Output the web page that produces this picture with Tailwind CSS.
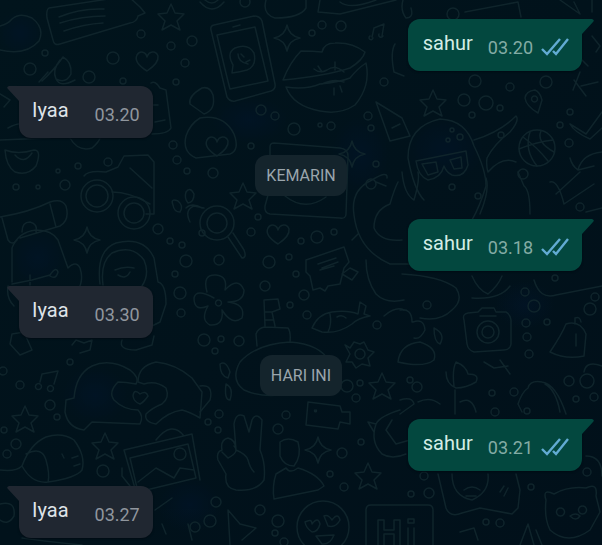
<!DOCTYPE html>
<html lang="id">
  <head>
    <meta charset="UTF-8" />
    <meta name="viewport" content="width=device-width, initial-scale=1.0" />
    <title>Chat</title>
    <script src="https://cdn.jsdelivr.net/npm/@tailwindcss/browser@4"></script>
  </head>
  <body class="relative min-h-screen overflow-x-hidden bg-[#01111b] font-[Roboto,sans-serif]">
    <!-- Wallpaper -->
    <svg class="absolute inset-0 h-full w-full" viewBox="0 0 602 545" preserveAspectRatio="xMidYMid slice" fill="none" stroke="#0f242b" stroke-width="1.5" stroke-linecap="round" stroke-linejoin="round" aria-hidden="true">
      <defs>
        <path id="star" d="M0-13 4-4 13-3 6 4 9 13 0 8-9 13-6 4-13-3-4-4Z" />
        <path id="spark" d="M0-13Q2-2 13 0 2 2 0 13-2 2-13 0-2-2 0-13Z" />
        <path id="heart" d="M0 10C-8 5-13 0-10-6-7-11-1-9 0-4 2-10 9-11 11-5 12 1 6 6 0 10Z" />
        <linearGradient id="night" x1="0" y1="0" x2="1" y2="1">
          <stop offset="0" stop-color="#01141c" />
          <stop offset="0.5" stop-color="#01121b" />
          <stop offset="1" stop-color="#01101a" />
        </linearGradient>
        <radialGradient id="glow">
          <stop offset="0" stop-color="#02152a" />
          <stop offset="1" stop-color="#02152a" stop-opacity="0" />
        </radialGradient>
      </defs>
      <rect width="602" height="545" fill="url(#night)" stroke="none" />

      <!-- soft blue patches -->
      <g fill="url(#glow)" stroke="none" opacity="0.6">
        <circle cx="20" cy="33" r="24" />
        <circle cx="38" cy="258" r="30" />
        <ellipse cx="445" cy="150" rx="40" ry="34" />
        <ellipse cx="95" cy="395" rx="34" ry="30" />
        <ellipse cx="250" cy="120" rx="40" ry="24" />
        <ellipse cx="360" cy="155" rx="30" ry="40" />
        <ellipse cx="190" cy="505" rx="32" ry="28" />
        <ellipse cx="525" cy="305" rx="30" ry="24" />
      </g>

      <!-- top row -->
      <path d="M0 26Q8 24 12 19 20 12 32 18 45 28 39 41 26 56 0 50" />
      <path d="M49 8 128-4 140 7 145 13 138 16Q137 22 130 23L60 44Q54 46 53 40L47 18Q46 10 49 8Z" />
      <path d="M59 17Q80 8 104 9M60 23Q82 16 105 16M64 31Q84 24 103 23" />
      <path d="M200 2Q212 16 224 2M205 0Q212 6 218 0" />
      <path d="M266 0Q262 14 275 18 300 18 306 8V0M320 0 318 12 340 14 396 0M340 2Q350 10 376 0" />
      <path d="M403 0Q400 10 406 18 414 18 411 8M465 12 518 2 521 17M560 0 580 14 574 2M592 0V12" />
      <path d="M211 30Q210 26 214 25L254 16Q260 16 262 21L275 84Q276 89 271 91L235 101Q230 102 227 97Z" />
      <path d="M217 35 255 27 268 81 230 89Q226 74 217 35M233 27 240 25" />
      <path d="M232 73 233 65Q226 53 235 48 248 43 254 53 257 66 247 70 240 72 232 73M238 54Q238 62 248 64M241 54 244 57M246 62 250 60" />
      <path d="M283 80Q290 62 301 51 313 51 322 52 324 43 335 43 352 42 365 52 363 60 350 68 325 76 283 80Z" />
      <path d="M314 69Q320 74 327 70 335 64 344 72M318 66 322 72M335 62V70" />
      <path d="M286 87Q306 90 320 84 340 82 350 78 357 69 366 63 371 86 355 105 340 115 320 111 293 106 286 87ZM322 84Q334 78 344 82M334 88V95M340 86 342 92" />
      <path d="M372 37 374 28 384 24 382 36M373 38A2 2 0 1 1 370 36M383 36A2 2 0 1 1 379 34" />

      <!-- second row -->
      <path d="M42 81Q54 70 63 57 72 62 71 74 66 84 56 79 52 70 60 60M39 82 48 72M75 80Q60 88 56 79" />
      <path d="M0 94 10 100 4 107M8 128Q25 118 40 130M5 150Q18 155 34 150 42 150 36 166 28 176 15 172 6 166 5 150ZM15 155Q24 165 32 153M0 140 50 138M70 138Q78 152 92 148 99 142 100 138" />
      <path d="M151 83Q155 80 160 88L166 90 171 128Q168 134 152 134M153 105H158M155 122 165 120M202 88Q210 86 213 95 216 110 204 114L190 104Q188 96 202 88Z" />
      <path d="M200 118Q224 114 234 134 240 150 230 154L196 158Q182 152 186 136 190 124 200 118Z" />
      <path d="M376 102 402 118 410 136 390 141ZM392 128 400 124M395 44Q390 52 394 72L404 76" />
      <path d="M270 155V147Q270 143 274 143L340 148Q348 149 348 156L346 214Q346 219 340 218L270 214Q264 213 265 206L268 195M285 196Q305 212 326 197" />

      <!-- ghost with glasses, party cone, ball -->
      <path d="M408 158Q408 126 440 119 466 120 474 146 486 170 486 186 480 206 472 220M408 158Q414 190 424 200M416 161 466 151 468 165Q464 178 452 175 446 172 444 166 441 178 428 180 418 176 416 161ZM422 164 436 162 438 172 428 175ZM450 160 461 157 462 168 454 169Z" />
      <path d="M474 140Q500 132 516 116 520 120 510 132 494 144 487 158 486 166 488 172 502 156 516 162 522 176" />
      <circle cx="537" cy="148" r="18" />
      <path d="M523 137Q538 148 548 161M530 132Q524 150 537 166M519 149Q536 142 553 140M541 131Q536 142 554 152" />
      <path d="M570 124 586 134 602 112M570 124Q574 132 590 139L602 128M570 158Q572 166 578 170 582 154 602 152M578 170 594 166" />
      <path d="M592 36 600 46 596 52M582 60 588 66M573 90 580 72M581 86 598 82M574 80 586 96" />

      <!-- left: sewing machine, skates, ring -->
      <path d="M84 176Q88 170 106 172L118 167 124 156 148 155 154 162V214H146M112 192Q130 192 150 204M130 168 152 188" />
      <circle cx="97" cy="196" r="16" />
      <circle cx="97" cy="196" r="11" />
      <circle cx="134" cy="213" r="16" />
      <circle cx="134" cy="213" r="10" />
      <path d="M0 217Q30 212 50 202 62 198 66 206 70 220 60 226L20 238M2 218 8 240Q12 246 17 240M50 204 56 227M22 232Q22 222 30 222 38 224 36 232" />
      <path d="M12 282V248Q18 232 36 230 52 230 58 240L68 268Q76 260 80 268 84 280 78 290M12 284 32 280 50 275Q56 266 58 272 56 280 50 276M30 275V285M8 286Q6 298 14 306" />
      <path d="M100 284Q96 250 116 243 144 236 154 258L158 282Q166 284 166 304L160 322 152 326M103 285Q100 262 112 253 132 244 144 260 150 274 142 286M115 270Q124 266 134 268M118 275Q126 280 130 272" />
      <path d="M122 340Q118 350 136 350L152 345 154 336M72 345 76 340 84 343 92 340 90 350 80 353M12 334 24 332 32 350 20 355 10 344Z" />
      <path d="M186 208Q192 202 202 208M190 222Q184 210 194 206L204 208M173 205Q170 198 178 201 184 206 180 212 174 212 173 205ZM186 192Q190 186 194 194 194 202 188 203 184 198 186 192Z" />
      <circle cx="217" cy="223" r="17" />
      <circle cx="217" cy="223" r="10" />
      <path d="M228 237 242 258Q247 258 244 250L233 233" />

      <!-- middle -->
      <path d="M207 292Q202 274 216 275 228 276 225 290 238 276 244 290 244 302 228 302 246 304 242 318 232 326 222 310 224 326 210 325 200 320 208 306 194 312 194 298 196 288 214 298M218 300A3 3 0 1 0 219 300" />
      <path d="M306 260 344 247 349 262 344 268 340 284 328 286 325 291 320 288 313 290 310 276 306 272ZM318 264 336 258M320 270 334 266M322 268 338 262M342 274 350 268 358 272 352 280Z" />
      <path d="M312 328Q318 314 332 312 348 310 358 314L360 302 366 306 364 314 370 316Q358 318 352 324 338 334 322 332ZM330 314Q332 324 328 332M337 317Q342 314 346 318" />
      <path d="M264 300 278 299 280 309 272 312 275 326M264 300 265 326M265 312H272M265 320H273M257 346 256 334Q258 328 265 327L288 328Q291 332 290 342M240 362Q256 344 290 342 320 344 330 362 334 380 310 388 270 402 244 390 230 380 240 362Z" />
      <path d="M220 364Q226 360 230 372L228 378Q220 376 220 364ZM226 384Q234 388 230 400 224 400 226 384ZM345 345 350 348 354 342 360 344 364 342 368 350 374 352 368 358 370 366 362 364 356 368 352 362 346 362 350 354Z" />
      <circle cx="360" cy="354" r="5" />
      <path d="M354 215Q350 190 372 180 388 170 387 178M354 215Q358 250 390 264L410 264M374 228Q374 210 390 204 394 190 398 182M374 228Q380 242 402 240M366 260Q366 280 376 294 386 304 404 300M384 316Q396 306 404 310M376 182 386 186M352 240 358 234" />
      <path d="M402 172Q404 194 414 200 420 180 418 172M480 214Q490 190 486 178M518 172 524 186Q530 190 530 214M550 182Q558 180 564 204L594 184M556 194 580 172M602 208 586 212" />

      <!-- below the second sent bubble -->
      <path d="M402 274Q440 276 456 288 464 300 452 310 440 322 420 318M472 276Q478 290 488 294 498 286 502 276M472 298Q500 300 510 286M534 280Q540 300 556 295L602 286" />
      <path d="M464 320Q462 314 468 313L478 312 482 308 494 308 496 312 506 312Q510 314 511 320V344Q510 350 504 350L474 352Q468 350 467 344Z" />
      <circle cx="488" cy="332" r="11" />
      <circle cx="488" cy="332" r="6" />
      <path d="M480 316H496M550 352Q562 334 566 324 580 320 586 334L584 356Q566 360 550 352ZM575 324V318Q580 316 581 322M576 334V346" />
      <path d="M400 310Q412 308 412 322M413 322Q424 318 425 330 420 340 414 338M434 328Q446 334 440 344 434 342 434 328ZM398 362Q400 344 420 342 438 348 434 360 424 368 398 362Z" />

      <!-- heart hands, dog, photo -->
      <path d="M66 400 74 398Q76 374 92 366 110 358 130 370 140 378 136 384 126 382 118 382 108 392 114 400 124 410 138 410 144 416 140 424L92 422 84 430Q68 428 65 412Z" />
      <path d="M138 382Q138 366 156 362 176 364 192 378L202 392 200 418Q190 412 182 410 168 412 156 424 144 422 146 414 152 408 162 404 170 398 166 388 156 380 144 384Z" />
      <path d="M133 396Q134 388 140 394 146 390 148 396 144 402 140 404 134 402 133 396Z" />
      <path d="M22 466Q30 444 46 437 62 432 74 440 86 456 82 470 76 478 48 482 32 484 22 466ZM26 454Q42 446 46 460 50 474 48 482M62 454 64 458M72 458 78 456M74 466 80 464" />
      <path d="M124 450 192 434 200 480M130 458 188 444 196 478 138 492ZM124 450 136 492 150 498M156 440Q172 420 184 436M122 468 122 476 130 486M138 482 156 468 174 478 180 468 194 470M155 510 172 498" />
      <circle cx="180" cy="454" r="6" />
      <path d="M40 382 42 374 58 371 54 384M40 384A3 3 0 1 0 41 385M52 386A3 3 0 1 0 53 387M0 470Q16 472 22 466M0 504Q16 500 14 516 8 526 0 520M22 538Q50 542 82 545M162 524 166 534M188 524 192 540" />

      <!-- peace hand, person, tag, emoji -->
      <path d="M200 386Q214 384 210 400L200 412M236 450 234 424Q236 412 244 416L249 432 252 420Q256 412 262 420L260 450Q266 464 264 480 256 492 236 490 224 488 226 474L218 460Q216 452 222 450 220 440 228 438 236 440 236 450ZM236 450Q246 454 248 460 250 468 254 472M222 452 228 458Q240 452 234 446" />
      <path d="M280 442Q288 436 298 442 302 456 294 466 284 466 280 456ZM276 474 286 468Q290 474 298 468 318 474 324 486L318 490 274 499Q272 486 276 474Z" />
      <path d="M308 402 340 406 342 412 350 412 350 424 340 422 338 429 306 425ZM315 410A1 1 0 1 0 316 410" />
      <circle cx="323" cy="527" r="26" />
      <path d="M305 522Q312 518 312 524 318 516 320 524 318 532 312 532 306 528 305 522ZM324 516Q328 514 332 520 338 512 340 520 336 528 328 526ZM316 536 334 535Q330 545 322 544ZM228 510 230 545M228 510 240 524 256 528 242 540" />
      <path d="M366 545V510Q366 505 371 505H428Q433 505 433 510V545M378 545V520H384V530H394V520H400V545M384 545V534H394V545M408 528V545M414 528V545M408 519H414V523H408Z" />
      <path d="M368 422 376 424Q380 416 400 410M376 424Q370 442 382 454 392 460 406 454M392 420 386 430 396 444 410 440M368 422 374 432" />

      <!-- right bottom -->
      <path d="M446 372Q446 384 456 388 466 388 476 382 480 374 468 374 466 366 456 362 452 370 454 386M455 390V414M400 400Q412 396 414 404L400 414M418 402Q430 396 440 404M460 402Q472 396 476 412M484 362 494 368 508 366M500 360 510 374" />
      <path d="M518 404Q522 392 528 388 530 380 542 382 556 384 566 414M518 404 522 412M545 384Q556 390 560 412M584 372Q586 360 602 366" />
      <path d="M438 474 446 508Q450 518 462 513L480 508 512 514 518 508 520 490 516 474M452 474Q452 496 472 500 490 492 488 474M464 490Q472 484 480 490M466 496H476M500 492 504 486M504 496 508 488" />
      <path d="M546 500Q542 488 554 494 568 486 586 488 598 482 596 496L600 512 590 530Q568 546 550 530 544 518 546 500ZM560 508A4 4 0 1 0 561 508M582 506A4 4 0 1 0 583 506M570 516Q576 512 580 516 576 522 570 516ZM586 456Q602 456 602 476M460 532 474 528 478 540M520 545 528 524 534 545M536 530 542 545" />

      <!-- small repeated marks -->
      <use href="#star" x="171" y="17" />
      <use href="#star" x="433" y="103" />
      <use href="#star" x="243" y="196" />
      <use href="#star" x="25" y="419" />
      <use href="#star" x="105" y="446" />
      <use href="#star" x="382" y="386" />
      <use href="#star" x="368" y="476" />
      <use href="#spark" x="287" y="38" />
      <use href="#spark" x="87" y="240" />
      <use href="#spark" x="318" y="450" />
      <use href="#spark" x="352" y="154" />
      <use href="#heart" x="147" y="61" />
      <use href="#heart" x="278" y="234" />
      <use href="#heart" x="217" y="146" />
      <path d="M535 90Q540 92 542 100L538 113Q526 106 525 98 526 91 535 90ZM534 96A3 3 0 1 0 535 96" />
      <g id="dots"></g>
    </svg>

    <main class="relative flex flex-col pt-[19px] pb-1">
      <article class="relative mr-5 flex h-13 items-start gap-[15px] self-end rounded-xl rounded-tr-none bg-[#03483f] pt-3 pr-[13px] pl-[15px] shadow-[0_1px_2px_#010c14]">
        <svg class="absolute top-0 -right-3 h-4 w-3.5" viewBox="0 0 14 16" fill="#03483f" aria-hidden="true"><path d="M0 0H12Q15 1 13 3L2 15V16H0Z" /></svg>
        <p class="text-xl leading-6 text-[#d5ece6]">sahur</p>
        <div class="flex gap-2 pt-[5px]">
          <time class="text-lg leading-6 text-[#83aca5]">03.20</time>
          <svg class="mt-0.5 h-5 w-7" viewBox="0 0 28 20" fill="none" stroke="#62abd3" stroke-width="2.4" role="img" aria-label="Dibaca"><path d="M1 11 6 16 19 1M12 13 15 16 27 1" /></svg>
        </div>
      </article>

      <article class="relative mt-[15px] ml-[19px] flex h-13 items-start gap-[26px] self-start rounded-xl rounded-tl-none bg-[#202731] pt-3 pr-[13px] pl-[13px] shadow-[0_1px_2px_#010c14]">
        <svg class="absolute top-0 -left-3 h-4 w-3.5" viewBox="0 0 14 16" fill="#202731" aria-hidden="true"><path d="M14 0H2Q-1 1 1 3L12 15V16H14Z" /></svg>
        <p class="text-xl leading-6 text-[#dfe3e8]">Iyaa</p>
        <time class="pt-[5px] text-lg leading-6 text-[#90969e]">03.20</time>
      </article>

      <h2 class="mt-[17px] self-center rounded-xl bg-[#14242c] px-[11px] py-2 text-base leading-[25px] text-[#9ba6ad]">KEMARIN</h2>

      <article class="relative mt-[23px] mr-5 flex h-13 items-start gap-[15px] self-end rounded-xl rounded-tr-none bg-[#03483f] pt-3 pr-[13px] pl-[15px] shadow-[0_1px_2px_#010c14]">
        <svg class="absolute top-0 -right-3 h-4 w-3.5" viewBox="0 0 14 16" fill="#03483f" aria-hidden="true"><path d="M0 0H12Q15 1 13 3L2 15V16H0Z" /></svg>
        <p class="text-xl leading-6 text-[#d5ece6]">sahur</p>
        <div class="flex gap-2 pt-[5px]">
          <time class="text-lg leading-6 text-[#83aca5]">03.18</time>
          <svg class="mt-0.5 h-5 w-7" viewBox="0 0 28 20" fill="none" stroke="#62abd3" stroke-width="2.4" role="img" aria-label="Dibaca"><path d="M1 11 6 16 19 1M12 13 15 16 27 1" /></svg>
        </div>
      </article>

      <article class="relative mt-[15px] ml-[19px] flex h-13 items-start gap-[26px] self-start rounded-xl rounded-tl-none bg-[#202731] pt-3 pr-[13px] pl-[13px] shadow-[0_1px_2px_#010c14]">
        <svg class="absolute top-0 -left-3 h-4 w-3.5" viewBox="0 0 14 16" fill="#202731" aria-hidden="true"><path d="M14 0H2Q-1 1 1 3L12 15V16H14Z" /></svg>
        <p class="text-xl leading-6 text-[#dfe3e8]">Iyaa</p>
        <time class="pt-[5px] text-lg leading-6 text-[#90969e]">03.30</time>
      </article>

      <h2 class="mt-[17px] self-center rounded-xl bg-[#14242c] px-[11px] py-2 text-base leading-[25px] text-[#9ba6ad]">HARI INI</h2>

      <article class="relative mt-[23px] mr-5 flex h-13 items-start gap-[15px] self-end rounded-xl rounded-tr-none bg-[#03483f] pt-3 pr-[13px] pl-[15px] shadow-[0_1px_2px_#010c14]">
        <svg class="absolute top-0 -right-3 h-4 w-3.5" viewBox="0 0 14 16" fill="#03483f" aria-hidden="true"><path d="M0 0H12Q15 1 13 3L2 15V16H0Z" /></svg>
        <p class="text-xl leading-6 text-[#d5ece6]">sahur</p>
        <div class="flex gap-2 pt-[5px]">
          <time class="text-lg leading-6 text-[#83aca5]">03.21</time>
          <svg class="mt-0.5 h-5 w-7" viewBox="0 0 28 20" fill="none" stroke="#62abd3" stroke-width="2.4" role="img" aria-label="Dibaca"><path d="M1 11 6 16 19 1M12 13 15 16 27 1" /></svg>
        </div>
      </article>

      <article class="relative mt-[15px] ml-[19px] flex h-13 items-start gap-[26px] self-start rounded-xl rounded-tl-none bg-[#202731] pt-3 pr-[13px] pl-[13px] shadow-[0_1px_2px_#010c14]">
        <svg class="absolute top-0 -left-3 h-4 w-3.5" viewBox="0 0 14 16" fill="#202731" aria-hidden="true"><path d="M14 0H2Q-1 1 1 3L12 15V16H14Z" /></svg>
        <p class="text-xl leading-6 text-[#dfe3e8]">Iyaa</p>
        <time class="pt-[5px] text-lg leading-6 text-[#90969e]">03.27</time>
      </article>
    </main>

    <script>
      // x, y, radius of the little circles on the wallpaper
      const circles = [
        [30, 69, 6], [45, 53, 3], [89, 77, 6], [113, 58, 6], [141, 34, 4], [171, 46, 4], [192, 41, 5], [185, 63, 4], [176, 82, 3],
        [173, 145, 4], [177, 160, 4], [187, 171, 3], [78, 166, 3], [58, 171, 2], [108, 162, 4], [16, 187, 3], [38, 187, 2], [65, 185, 5],
        [245, 2, 5], [322, 25, 4], [341, 26, 5], [312, 33, 3], [261, 110, 5], [275, 116, 4], [294, 129, 6], [331, 126, 4], [320, 125, 2],
        [251, 146, 3], [384, 82, 4], [368, 116, 4], [371, 128, 3], [376, 164, 3], [213, 173, 5], [453, 14, 6], [475, 81, 6], [510, 87, 4],
        [546, 82, 6], [464, 100, 6], [486, 103, 7], [472, 115, 3], [500, 108, 3], [570, 112, 3], [560, 125, 3], [569, 143, 4], [523, 174, 5],
        [501, 135, 3], [460, 137, 3], [448, 140, 2], [452, 130, 2], [158, 229, 5], [170, 241, 3], [182, 245, 3], [186, 261, 6], [175, 274, 3],
        [180, 293, 6], [181, 313, 4], [202, 233, 3], [258, 217, 3], [251, 232, 4], [301, 241, 3], [317, 237, 6], [334, 232, 3], [219, 260, 5],
        [269, 262, 6], [289, 257, 3], [296, 274, 3], [265, 286, 5], [304, 295, 5], [290, 305, 3], [307, 315, 4], [377, 325, 4], [204, 340, 6],
        [221, 339, 3], [239, 341, 5], [215, 351, 3], [371, 184, 5], [452, 187, 3], [478, 196, 3], [580, 207, 4], [555, 278, 3], [525, 292, 4],
        [534, 306, 6], [590, 309, 6], [595, 297, 4], [526, 323, 4], [547, 322, 3], [527, 337, 4], [529, 354, 4], [427, 305, 4], [3, 371, 4],
        [20, 385, 4], [70, 362, 3], [50, 405, 5], [57, 417, 3], [4, 430, 3], [16, 444, 5], [7, 454, 4], [103, 471, 6], [347, 386, 6],
        [360, 383, 3], [356, 398, 4], [286, 415, 4], [278, 429, 5], [219, 414, 4], [208, 422, 3], [218, 430, 3], [342, 453, 5], [361, 442, 3],
        [330, 474, 3], [344, 487, 4], [216, 502, 5], [210, 521, 6], [260, 510, 5], [278, 521, 6], [275, 533, 3], [284, 542, 4], [195, 527, 5],
        [410, 380, 3], [417, 387, 5], [492, 393, 3], [514, 392, 4], [495, 412, 4], [527, 411, 3], [569, 381, 5], [587, 381, 7], [576, 399, 3],
        [594, 397, 4], [424, 476, 4], [411, 494, 3], [429, 493, 5], [486, 522, 3], [500, 523, 4], [531, 487, 3], [587, 472, 4], [123, 81, 3],
      ];

      const dots = document.querySelector("#dots");
      circles.forEach(([cx, cy, r]) => {
        const circle = document.createElementNS("http://www.w3.org/2000/svg", "circle");
        circle.setAttribute("cx", cx);
        circle.setAttribute("cy", cy);
        circle.setAttribute("r", r);
        dots.appendChild(circle);
      });
    </script>
  </body>
</html>
